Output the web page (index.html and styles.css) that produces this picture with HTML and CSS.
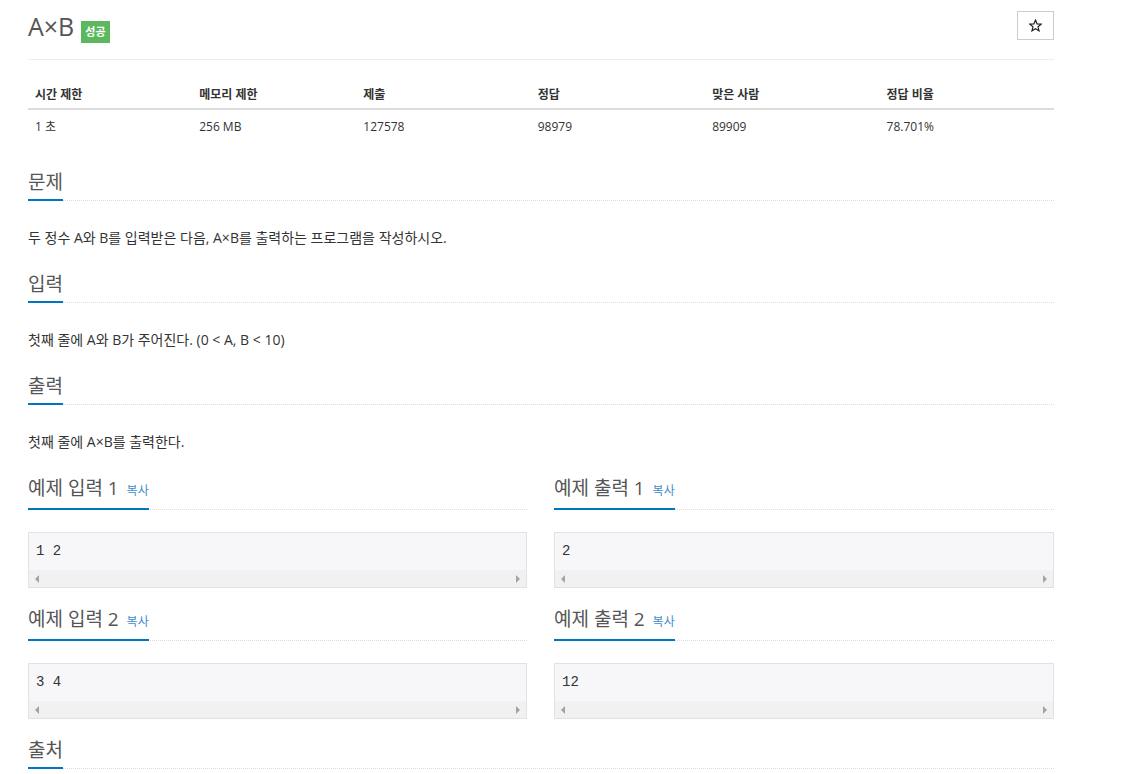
FILE: index.html
```html
<!DOCTYPE html>
<html lang="ko">
<head>
    <meta charset="UTF-8">
    <meta name="viewport" content="width=device-width, initial-scale=1.0">
    <title>A×B</title>
    <link rel="stylesheet" href="styles.css">
</head>
<body>
    <div class="container">
        <div class="page-header">
            <h1><span class="title">A×B</span><span class="label-success">성공</span></h1>
            <button class="star-btn" type="button">
                <svg width="13" height="13" viewBox="0 0 24 24"><polygon points="12,2 14.9,8.9 22.5,9.5 16.7,14.4 18.5,21.8 12,17.8 5.5,21.8 7.3,14.4 1.5,9.5 9.1,8.9" fill="none" stroke="#222" stroke-width="2.2" stroke-linejoin="miter"/></svg>
            </button>
        </div>

        <table class="problem-info">
            <thead>
                <tr>
                    <th class="w16">시간 제한</th>
                    <th class="w16">메모리 제한</th>
                    <th class="w17">제출</th>
                    <th class="w17">정답</th>
                    <th class="w17">맞은 사람</th>
                    <th class="w17">정답 비율</th>
                </tr>
            </thead>
            <tbody>
                <tr>
                    <td>1 초</td>
                    <td>256 MB</td>
                    <td>127578</td>
                    <td>98979</td>
                    <td>89909</td>
                    <td>78.701%</td>
                </tr>
            </tbody>
        </table>

        <section class="problem-section">
            <div class="headline"><h2>문제</h2></div>
            <p>두 정수 A와 B를 입력받은 다음, A×B를 출력하는 프로그램을 작성하시오.</p>
        </section>

        <section class="problem-section">
            <div class="headline"><h2>입력</h2></div>
            <p>첫째 줄에 A와 B가 주어진다. (0 &lt; A, B &lt; 10)</p>
        </section>

        <section class="problem-section">
            <div class="headline"><h2>출력</h2></div>
            <p>첫째 줄에 A×B를 출력한다.</p>
        </section>

        <div class="samples">
            <div class="sample">
                <div class="headline"><h2>예제 입력 1 <a class="copy" href="#">복사</a></h2></div>
                <div class="sample-box">
                    <pre>1 2</pre>
                    <div class="hscroll"><span class="arrow-left"></span><span class="arrow-right"></span></div>
                </div>
            </div>
            <div class="sample">
                <div class="headline"><h2>예제 출력 1 <a class="copy" href="#">복사</a></h2></div>
                <div class="sample-box">
                    <pre>2</pre>
                    <div class="hscroll"><span class="arrow-left"></span><span class="arrow-right"></span></div>
                </div>
            </div>
            <div class="sample">
                <div class="headline"><h2>예제 입력 2 <a class="copy" href="#">복사</a></h2></div>
                <div class="sample-box">
                    <pre>3 4</pre>
                    <div class="hscroll"><span class="arrow-left"></span><span class="arrow-right"></span></div>
                </div>
            </div>
            <div class="sample">
                <div class="headline"><h2>예제 출력 2 <a class="copy" href="#">복사</a></h2></div>
                <div class="sample-box">
                    <pre>12</pre>
                    <div class="hscroll"><span class="arrow-left"></span><span class="arrow-right"></span></div>
                </div>
            </div>
        </div>

        <section class="problem-section source">
            <div class="headline"><h2>출처</h2></div>
        </section>
    </div>
</body>
</html>
```

FILE: styles.css
```css
body {
    font-family: "Open Sans", "Noto Sans CJK KR", sans-serif;
    font-size: 14px;
    line-height: 20px;
    color: #333;
    background: #fff;
    margin: 0;
    padding: 0;
}
.container {
    width: 1026px;
    margin-left: 28px;
}
.page-header {
    display: flex;
    justify-content: space-between;
    align-items: flex-start;
    padding-top: 10px;
    padding-bottom: 16px;
    border-bottom: 1px solid #eee;
}
h1 {
    display: flex;
    align-items: flex-start;
    gap: 7px;
    margin: 0;
    font-size: 25px;
    line-height: 32px;
    font-weight: 400;
    color: #555;
}
.label-success {
    margin-top: 11px;
    background-color: #5cb85c;
    color: #fff;
    font-size: 11px;
    line-height: 14px;
    font-weight: bold;
    padding: 4px 4px;
}
.star-btn {
    display: flex;
    align-items: center;
    justify-content: center;
    margin-top: 1px;
    width: 37px;
    height: 29px;
    background: #fff;
    border: 1px solid #ccc;
    padding: 0;
    cursor: pointer;
}
.problem-info {
    width: 100%;
    border-collapse: collapse;
    margin-top: 18px;
    margin-bottom: 25px;
    font-size: 12px;
    line-height: 17px;
}
.problem-info th {
    text-align: left;
    font-weight: bold;
    padding: 8px 7px 5px;
    border-bottom: 2px solid #ddd;
}
.problem-info td {
    padding: 8px 7px;
}
.w16 {
    width: 16%;
}
.w17 {
    width: 17%;
}
.headline {
    display: flex;
    border-bottom: 1px dotted #ddd;
    margin-bottom: 27px;
}
.headline h2 {
    margin: 0 0 -1px;
    padding-bottom: 3px;
    font-size: 19px;
    line-height: 28px;
    font-weight: 400;
    color: #555;
    border-bottom: 2px solid #0076c0;
}
.problem-section {
    margin-bottom: 22px;
}
.problem-section p {
    margin: 0;
}
.samples {
    display: grid;
    grid-template-columns: 499px 500px;
    column-gap: 27px;
    row-gap: 17px;
    margin-top: 20px;
    margin-bottom: 17px;
}
.sample .headline {
    margin-bottom: 22px;
}
.copy {
    font-size: 12px;
    color: #428bca;
    text-decoration: none;
    margin-left: 3px;
}
.sample-box {
    border: 1px solid #e1e1e8;
    background: #f7f7f9;
}
.sample-box pre {
    margin: 0;
    padding: 9px 7px 10px;
    font-family: "Liberation Mono", monospace;
    font-size: 14px;
    line-height: 18px;
    color: #333;
}
.hscroll {
    display: flex;
    justify-content: space-between;
    align-items: center;
    height: 17px;
    padding: 0 6px;
    background: #f1f1f1;
}
.arrow-left {
    width: 0;
    height: 0;
    border-top: 4px solid transparent;
    border-bottom: 4px solid transparent;
    border-right: 4px solid #a3a3a3;
}
.arrow-right {
    width: 0;
    height: 0;
    border-top: 4px solid transparent;
    border-bottom: 4px solid transparent;
    border-left: 4px solid #a3a3a3;
}
.source .headline {
    margin-bottom: 0;
}
```
